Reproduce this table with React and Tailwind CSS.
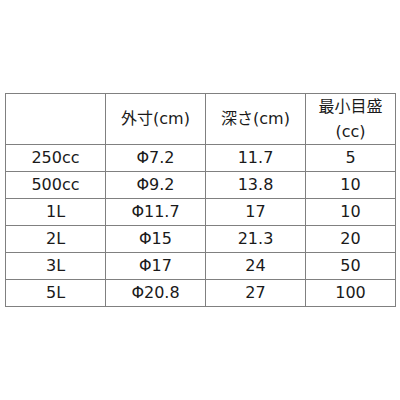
export default function App() {
  const rows = [
    ["250cc", "Φ7.2", "11.7", "5"],
    ["500cc", "Φ9.2", "13.8", "10"],
    ["1L", "Φ11.7", "17", "10"],
    ["2L", "Φ15", "21.3", "20"],
    ["3L", "Φ17", "24", "50"],
    ["5L", "Φ20.8", "27", "100"],
  ];
  const widths = ["w-[100px]", "w-[100px]", "w-[100px]", "w-[90px]"];
  return (
    <div
      className="w-[400px] h-[400px] bg-white pt-[93px] pl-[5px] text-[#1a1a1a] text-[16px]"
      style={{ fontFamily: '"DejaVu Sans", "Noto Sans CJK JP", sans-serif' }}
    >
      <div className="inline-flex flex-col border-l border-t border-[#808080]">
        <div className="flex h-[51px]">
          <div className={`${widths[0]} border-r border-b border-[#808080]`}></div>
          <div className={`${widths[1]} border-r border-b border-[#808080] flex items-center justify-center`}>外寸(cm)</div>
          <div className={`${widths[2]} border-r border-b border-[#808080] flex items-center justify-center`}>深さ(cm)</div>
          <div className={`${widths[3]} border-r border-b border-[#808080] flex flex-col items-center justify-center leading-[25px]`}>
            <span>最小目盛</span>
            <span>(cc)</span>
          </div>
        </div>
        {rows.map((r, i) => (
          <div key={i} className="flex h-[27px]">
            {r.map((c, j) => (
              <div key={j} className={`${widths[j]} border-r border-b border-[#808080] flex items-center justify-center`}>
                {c}
              </div>
            ))}
          </div>
        ))}
      </div>
    </div>
  );
}
